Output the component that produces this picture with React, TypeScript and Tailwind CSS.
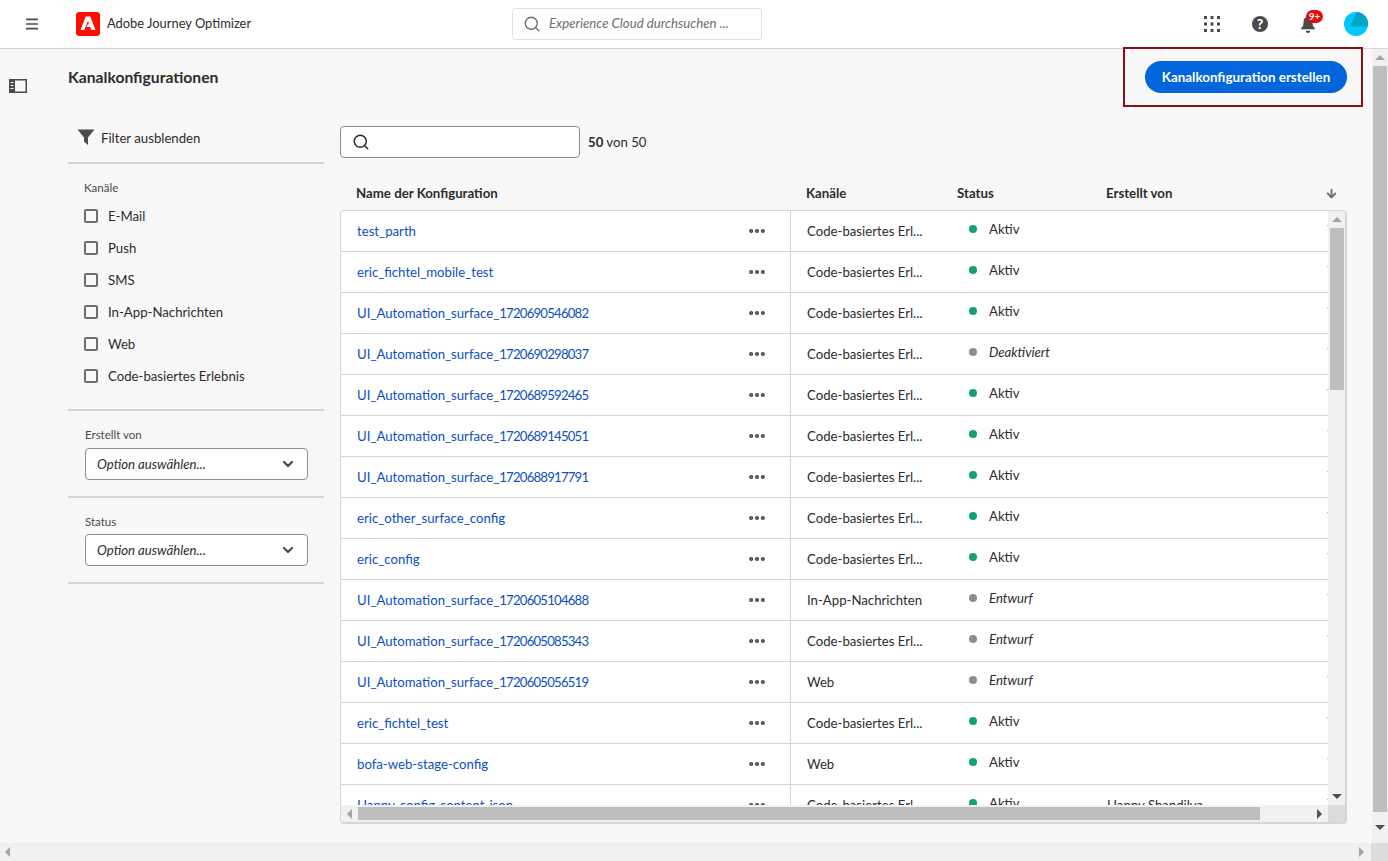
import { Search, Menu, ChevronDown, MoreHorizontal, ArrowDown } from "lucide-react"

const FONT = "font-['Lato','Open_Sans',sans-serif]"

const channels = ["E-Mail", "Push", "SMS", "In-App-Nachrichten", "Web", "Code-basiertes Erlebnis"]

const CODE = "Code-basiertes Erl..."

const rows = [
  { name: "test_parth", channel: CODE, status: "Aktiv" },
  { name: "eric_fichtel_mobile_test", channel: CODE, status: "Aktiv" },
  { name: "UI_Automation_surface_", id: "1720690546082", channel: CODE, status: "Aktiv" },
  { name: "UI_Automation_surface_", id: "1720690298037", channel: CODE, status: "Deaktiviert" },
  { name: "UI_Automation_surface_", id: "1720689592465", channel: CODE, status: "Aktiv" },
  { name: "UI_Automation_surface_", id: "1720689145051", channel: CODE, status: "Aktiv" },
  { name: "UI_Automation_surface_", id: "1720688917791", channel: CODE, status: "Aktiv" },
  { name: "eric_other_surface_config", channel: CODE, status: "Aktiv" },
  { name: "eric_config", channel: CODE, status: "Aktiv" },
  { name: "UI_Automation_surface_", id: "1720605104688", channel: "In-App-Nachrichten", status: "Entwurf" },
  { name: "UI_Automation_surface_", id: "1720605085343", channel: CODE, status: "Entwurf" },
  { name: "UI_Automation_surface_", id: "1720605056519", channel: "Web", status: "Entwurf" },
  { name: "eric_fichtel_test", channel: CODE, status: "Aktiv" },
  { name: "bofa-web-stage-config", channel: "Web", status: "Aktiv" },
  { name: "Happy-config-content-json", channel: CODE, status: "Aktiv", author: "Happy Shandilya" },
]

function Arrow({ dir, color = "#6e6e6e" }: { dir: "up" | "down" | "left" | "right"; color?: string }) {
  const points = {
    up: "0,6 5,1 10,6",
    down: "0,1 10,1 5,6",
    left: "6,0 6,10 1,5",
    right: "1,0 1,10 6,5",
  }[dir]
  const box = dir === "up" || dir === "down" ? "0 0 10 7" : "0 0 7 10"
  const cls = dir === "up" || dir === "down" ? "w-[10px] h-[7px]" : "w-[7px] h-[10px]"
  return (
    <svg viewBox={box} className={cls}>
      <polygon points={points} fill={color} />
    </svg>
  )
}

function SelectBox() {
  return (
    <div className="flex items-center justify-between h-8 w-[223px] ml-[17px] pl-[11px] pr-[11px] bg-white border border-[#8e8e8e] rounded-[4px]">
      <span className="pt-[2px] text-[13.2px] italic text-[#2c2c2c]">Option auswählen...</span>
      <ChevronDown className="w-[16px] h-[16px] text-[#4b4b4b]" strokeWidth={3.2} />
    </div>
  )
}

function Sidebar() {
  return (
    <aside className="w-[256px] shrink-0 pt-[16px]">
      <div className="flex items-center h-[24px] pl-[9px] mb-[13px] mt-[2px]">
        <svg viewBox="0 0 18 18" className="w-[18px] h-[18px] text-[#4b4b4b]">
          <path d="M0.5 1.5h17L11 9.5V17l-4-3.5v-4z" fill="currentColor" />
        </svg>
        <span className="ml-[6px] pt-[4px] text-[13.2px] text-[#2c2c2c]">Filter ausblenden</span>
      </div>
      <div className="h-[2px] bg-[#d5d5d5]" />
      <div className="pl-[16px] pt-[16px] h-[245px]">
        <div className="text-[11.5px] leading-[16px] text-[#4b4b4b] mb-[4px]">Kanäle</div>
        {channels.map((c) => (
          <div key={c} className="flex items-center h-[32px]">
            <span className="w-[14px] h-[14px] border-2 border-[#6e6e6e] rounded-[2px] bg-[#f8f8f8]" />
            <span className="ml-[10px] pt-[2px] text-[13.2px] text-[#2c2c2c]">{c}</span>
          </div>
        ))}
      </div>
      <div className="h-[2px] bg-[#d5d5d5]" />
      <div className="h-[85px] pt-[16px]">
        <div className="ml-[17px] text-[11.5px] leading-[16px] text-[#4b4b4b] mb-[5px]">Erstellt von</div>
        <SelectBox />
      </div>
      <div className="h-[2px] bg-[#d5d5d5]" />
      <div className="h-[84px] pt-[16px]">
        <div className="ml-[17px] text-[11.5px] leading-[16px] text-[#4b4b4b] mb-[4px]">Status</div>
        <SelectBox />
      </div>
      <div className="h-[2px] bg-[#d5d5d5]" />
    </aside>
  )
}

function StatusCell({ status }: { status: string }) {
  const active = status === "Aktiv"
  return (
    <div className="w-[150px] shrink-0 flex items-center pl-[12px] pb-[4px]">
      <span className={`w-2 h-2 rounded-full ${active ? "bg-[#12a26c]" : "bg-[#8e8e8e]"}`} />
      <span className={`ml-3 pt-[2px] text-[13.2px] text-[#2c2c2c] ${active ? "" : "italic"}`}>{status}</span>
    </div>
  )
}

function Table() {
  return (
    <div className="flex-1 min-w-0">
      <div className="flex items-center h-[34px] mt-[18px] pt-[2px] text-[13.25px] font-bold text-[#2c2c2c]">
        <div className="w-[466px] pl-[16px]">Name der Konfiguration</div>
        <div className="w-[151px]">Kanäle</div>
        <div className="w-[149px]">Status</div>
        <div className="w-[219px]">Erstellt von</div>
        <ArrowDown className="w-[13px] h-[13px] -mt-[2px] text-[#6e6e6e]" strokeWidth={3.5} />
      </div>
      <div className="h-[614px] w-[1007px] flex flex-col bg-white border-2 border-[#d5d5d5] border-l-1 border-t-1 rounded-[4px] overflow-hidden">
        <div className="flex h-[595px] min-h-0">
          <div className="flex-1 min-w-0 overflow-hidden">
            {rows.map((r) => (
              <div key={r.name + (r.id ?? "")} className="flex h-[41px] border-b border-[#d5d5d5] text-[13.2px] text-[#2c2c2c]">
                <div className="w-[450px] shrink-0 flex items-center border-r border-[#d5d5d5]">
                  <a className="ml-[16px] pt-[2px] text-[#0d4fc1] flex-1 truncate">
                    {r.name}
                    {r.id && <span className="tracking-[-0.8px]">{r.id}</span>}
                  </a>
                  <MoreHorizontal className="w-[20px] h-[20px] mr-[23px] text-[#4b4b4b]" strokeWidth={3} />
                </div>
                <div className="w-[166px] shrink-0 flex items-center pl-[16px] pt-[2px]">{r.channel}</div>
                <StatusCell status={r.status} />
                <div className="w-[220px] shrink-0 flex items-center pt-[2px]">{r.author}</div>
                <div className="flex items-center text-[#2c2c2c] font-medium">7</div>
              </div>
            ))}
          </div>
          <div className="w-[17px] shrink-0 bg-[#f1f1f1] flex flex-col items-center">
            <div className="h-[17px] flex items-center justify-center"><Arrow dir="up" color="#a3a3a3" /></div>
            <div className="w-[14px] h-[162px] bg-[#bebebe]" />
            <div className="flex-1" />
            <div className="h-[17px] flex items-center justify-center"><Arrow dir="down" color="#505050" /></div>
          </div>
        </div>
        <div className="flex h-[17px] bg-[#f1f1f1]">
          <div className="w-[17px] flex items-center justify-center"><Arrow dir="left" color="#a3a3a3" /></div>
          <div className="w-[902px] h-[13px] mt-[2px] bg-[#bebebe]" />
          <div className="flex-1 flex items-center justify-end pr-[5px]"><Arrow dir="right" color="#505050" /></div>
          <div className="w-[17px] bg-[#dcdcdc]" />
        </div>
      </div>
    </div>
  )
}

export default function App() {
  return (
    <div className={`w-[1388px] h-[861px] overflow-hidden flex flex-col bg-[#f8f8f8] ${FONT}`}>
      <header className="h-[49px] shrink-0 flex items-center bg-white border-b border-[#d5d5d5]">
        <Menu className="w-[16px] h-[16px] ml-[24px] text-[#4b4b4b]" strokeWidth={2.5} />
        <div className="ml-[36px] w-[24px] h-[24px] rounded-[3px] bg-[#fa0f00] flex items-center justify-center">
          <svg viewBox="0 0 24 24" className="w-[24px] h-[24px]">
            <path d="M9.7 4.5h4.6L19.5 18h-4.1l-1.2-3h-3.7l1.5-3.2h1l-1-3L8.3 18H4.5z" fill="#fff" />
          </svg>
        </div>
        <span className="ml-[7px] w-[144px] whitespace-nowrap text-[12.9px] text-[#2c2c2c]">Adobe Journey Optimizer</span>
        <div className="ml-[261px] w-[250px] h-[32px] flex items-center pl-[10px] border border-[#e1e1e1] rounded-[3px]">
          <Search className="w-[18px] h-[18px] text-[#6e6e6e]" strokeWidth={1.8} />
          <span className="ml-[8px] text-[13.2px] italic text-[#6e6e6e]">Experience Cloud durchsuchen ...</span>
        </div>
        <div className="ml-auto flex items-center">
          <svg viewBox="0 0 16 16" className="w-[16px] h-[16px] text-[#4b4b4b]">
            {[0, 6.5, 13].flatMap((y) =>
              [0, 6.5, 13].map((x) => <rect key={`${x}-${y}`} x={x} y={y} width="3" height="3" fill="currentColor" />)
            )}
          </svg>
          <span className="ml-[32px] w-[16px] h-[16px] rounded-full bg-[#4b4b4b] flex items-center justify-center text-white text-[14px] font-black leading-none">?</span>
          <div className="relative ml-[32px] w-[16px] h-[18px]">
            <svg viewBox="0 0 18 20" className="w-[16px] h-[18px] text-[#4b4b4b]">
              <path d="M9 1a2 2 0 0 0-1.6 1.2C5 3 4 5 4 8c0 4-1.5 5.5-3 7v1h16v-1c-1.5-1.5-3-3-3-7 0-3-1-5-3.4-5.8A2 2 0 0 0 9 1zM6.5 17.5a2.5 2.5 0 0 0 5 0z" fill="currentColor" />
            </svg>
            <span className="absolute -top-[5px] left-[6px] h-[13px] w-[17px] rounded-full bg-[#e80a0a] text-white text-[10px] font-bold leading-[13px] text-center">9+</span>
          </div>
          <svg viewBox="0 0 24 24" className="ml-[28px] mr-[20px] w-[24px] h-[24px]">
            <circle cx="12" cy="12" r="12" fill="#00c8ff" />
            <path d="M13 0A12 12 0 0 1 24 14.5H6z" fill="#00a5c6" />
          </svg>
        </div>
      </header>

      <div className="flex-1 min-h-0 flex">
        <div className="flex-1 min-w-0 flex">
          <div className="w-[68px] shrink-0 pt-[30px] pl-[9px]">
            <svg viewBox="0 0 18 14" className="w-[18px] h-[14px]">
              <path fillRule="evenodd" d="M0 0h18v14H0zM6 1.5V12.5H16.5V1.5z" fill="#4b4b4b" />
              <path d="M1.5 3h3v1h-3zM1.5 6h3v1h-3zM1.5 9h3v1h-3z" fill="#f8f8f8" />
            </svg>
          </div>
          <div className="flex-1 min-w-0">
            <div className="flex items-center justify-between -mt-[2px]">
              <h1 className="pt-[2px] text-[15.7px] font-bold text-[#2c2c2c]">Kanalkonfigurationen</h1>
              <div className="w-[240px] h-[60px] mr-[9px] flex items-center justify-end pr-[14px] border-2 border-[#8b1015]">
                <button className="h-[32px] w-[202px] rounded-full bg-[#0265dc] text-white text-[13.4px] font-bold">
                  Kanalkonfiguration erstellen
                </button>
              </div>
            </div>
            <div className="flex gap-4">
              <Sidebar />
              <div className="w-[1007px] pt-[19px]">
                <div className="flex items-center">
                  <div className="w-[240px] h-[32px] flex items-center pl-[11px] bg-white border border-[#8e8e8e] rounded-[4px]">
                    <Search className="w-[18px] h-[18px] text-[#2c2c2c]" strokeWidth={2} />
                  </div>
                  <span className="ml-[8px] pt-[2px] text-[13.2px] text-[#2c2c2c]"><b>50</b> von 50</span>
                </div>
                <Table />
              </div>
            </div>
          </div>
        </div>
        <div className="w-[16px] shrink-0 flex flex-col items-center bg-[#f1f1f1]">
          <div className="h-[17px] flex items-center justify-center"><Arrow dir="up" color="#a3a3a3" /></div>
          <div className="w-[14px] h-[746px] bg-[#bebebe]" />
          <div className="flex-1 flex items-center justify-center"><Arrow dir="down" color="#505050" /></div>
        </div>
      </div>

      <div className="h-[18px] shrink-0 flex items-center justify-between bg-[#f1f1f1]">
        <div className="pl-[4px]"><Arrow dir="left" color="#a3a3a3" /></div>
        <div className="flex items-center h-full">
          <Arrow dir="right" color="#a3a3a3" />
          <div className="ml-[6px] w-[17px] h-full bg-[#dcdcdc]" />
        </div>
      </div>
    </div>
  )
}
